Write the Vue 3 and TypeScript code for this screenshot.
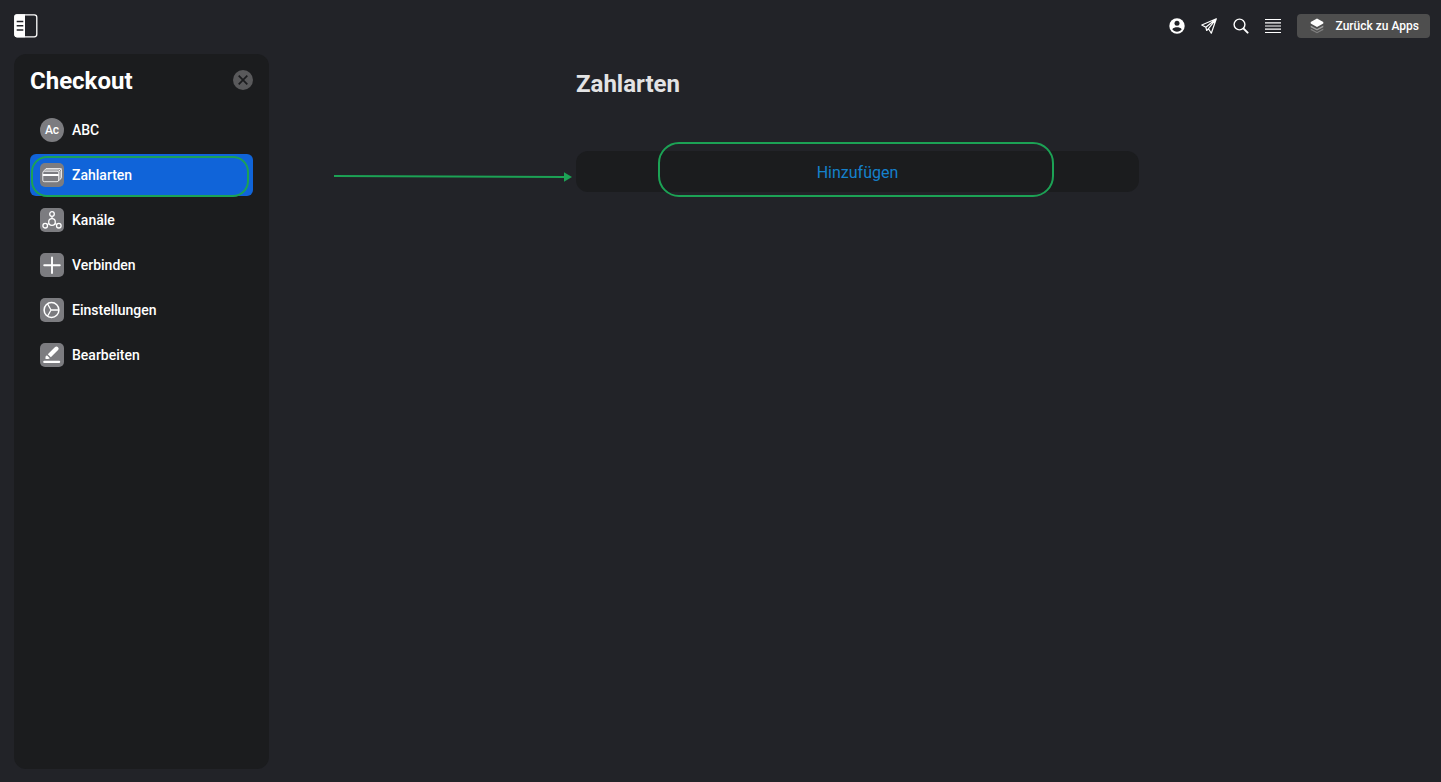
<script setup lang="ts">
import { ref } from 'vue'

type IconName = 'avatar' | 'cards' | 'channels' | 'plus' | 'gear' | 'edit'

interface NavItem {
  label: string
  icon: IconName
}

const items: NavItem[] = [
  { label: 'ABC', icon: 'avatar' },
  { label: 'Zahlarten', icon: 'cards' },
  { label: 'Kanäle', icon: 'channels' },
  { label: 'Verbinden', icon: 'plus' },
  { label: 'Einstellungen', icon: 'gear' },
  { label: 'Bearbeiten', icon: 'edit' },
]

const active = ref('Zahlarten')
</script>

<template>
  <div class="app">
    <header class="topbar">
      <button class="icon-button" type="button" aria-label="Seitenleiste">
        <svg width="24" height="24" viewBox="0 0 24 24">
          <rect x=".8" y=".8" width="22" height="22" rx="2.5" fill="none" stroke="#fff" stroke-width="1.3" />
          <path d="M3 .3h8v23H3A2.500 2.500 0 0 1 .3 21V3A2.500 2.500 0 0 1 3 .3Z" fill="#fff" />
          <path d="M2.700 7.500h6.600M2.700 11.700h6.600M2.700 16h6.600" stroke="#222328" stroke-width="1.400" />
        </svg>
      </button>
      <div class="actions">
        <button class="icon-button" type="button" aria-label="Konto">
          <svg width="16" height="16" viewBox="0 0 16 16">
            <circle cx="8" cy="8" r="7.7" fill="#fff" />
            <circle cx="8" cy="5.3" r="2.5" fill="#222328" />
            <path d="M3.300 11.200C4.200 9.800 6.200 9.200 8 9.200s3.800.6 4.700 2C11.700 12.800 10 13.700 8 13.700s-3.700-.9-4.700-2.500Z" fill="#222328" />
          </svg>
        </button>
        <button class="icon-button" type="button" aria-label="Senden">
          <svg width="16" height="16" viewBox="0 0 16 16" fill="none" stroke="#fff" stroke-width="1.200" stroke-linejoin="round">
            <path d="M15.300.8.8 7l4 2.200L15.300.8 10.300 15.200 7.500 10.700ZM4.800 9.200l.9 3.300 1.800-1.800" />
          </svg>
        </button>
        <button class="icon-button" type="button" aria-label="Suchen">
          <svg width="16" height="16" viewBox="0 0 16 16" fill="none" stroke="#fff">
            <circle cx="6.500" cy="6.500" r="5.400" stroke-width="1.400" />
            <path d="m10.600 10.600 4 4" stroke-width="2" stroke-linecap="round" />
          </svg>
        </button>
        <button class="icon-button" type="button" aria-label="Menü">
          <svg width="16" height="16" viewBox="0 0 16 16" stroke="#fff" stroke-width="1.200">
            <path d="M0 1.500h16M0 4.800h16M0 8h16M0 11.200h16M0 14.500h16" />
          </svg>
        </button>
        <button class="back" type="button">
          <svg width="14" height="16" viewBox="0 0 14 16">
            <path d="m7 .5 6.300 3.400v1.700L7 9 .7 5.600V3.900Z" fill="#fff" />
            <path d="M.7 7.500 7 10.900l6.300-3.400v1.700L7 12.600.7 9.200Z" fill="#a0a0a0" />
            <path d="M.7 10.600 7 14l6.300-3.400v1.300L7 15.300.7 11.900Z" fill="#808080" />
          </svg>
          <span>Zurück zu Apps</span>
        </button>
      </div>
    </header>

    <div class="body">
      <aside class="sidebar">
        <div class="sidebar-head">
          <h2>Checkout</h2>
          <button class="icon-button" type="button" aria-label="Schließen">
            <svg width="20" height="20" viewBox="0 0 20 20">
              <circle cx="10" cy="10" r="10" fill="#59595b" />
              <path d="m5.700 5.700 8.600 8.600m0-8.600-8.600 8.600" stroke="#1b1c1e" stroke-width="1.700" />
            </svg>
          </button>
        </div>
        <nav>
          <button
            v-for="item in items"
            :key="item.label"
            type="button"
            class="nav-item"
            :class="{ active: item.label === active }"
            @click="active = item.label"
          >
            <span v-if="item.icon === 'avatar'" class="tile round">Ac</span>
            <span v-else class="tile">
              <svg width="24" height="24" viewBox="0 0 24 24" fill="none" stroke="#fff">
                <g v-if="item.icon === 'cards'" stroke-width=".8" stroke-linejoin="round">
                  <rect x="2.800" y="8.300" width="15.800" height="10.400" rx="1.500" />
                  <path d="M3.500 8.300 6 5.500h14.500q1 0 1 1v8.300l-3 3.200M5 6.900h13.500q1.500 0 1.500 1.400v8M18.300 8.600l2.900-2.900" />
                  <path d="M2.800 12h15.800" stroke-width="2" />
                </g>
                <g v-else-if="item.icon === 'channels'" stroke-width="1.300">
                  <circle cx="12" cy="14" r="3.300" />
                  <circle cx="12" cy="6" r="2.300" />
                  <circle cx="5.200" cy="17.700" r="2.300" />
                  <circle cx="18.800" cy="17.700" r="2.300" />
                  <path d="M12 8.400v2.300M7.300 16.500l1.800-1M16.700 16.500l-1.800-1" />
                </g>
                <path v-else-if="item.icon === 'plus'" d="M12 4.500v15.500M4.200 12.300h15.600" stroke-width="1.900" stroke-linecap="round" />
                <g v-else-if="item.icon === 'gear'" stroke-width="1.500">
                  <circle cx="11.500" cy="12" r="7.400" />
                  <path d="M7.500 5.700 11 12l-3.500 6.300M11 12h8" stroke-width="1.300" />
                </g>
                <g v-else stroke="none" fill="#fff">
                  <path d="m7.800 11.300 7.300-7.200q1.400-1.300 2.900.1 1.400 1.500.1 2.900L10.800 14.300Z" />
                  <path d="m6.900 12.200 3 3-1.700.8H5.500v-2.200Z" />
                  <rect x="3.200" y="17.700" width="17" height="2.300" rx="1.100" />
                </g>
              </svg>
            </span>
            <span>{{ item.label }}</span>
            <span v-if="item.icon === 'cards'" class="marker nav-marker"></span>
          </button>
        </nav>
      </aside>

      <main>
        <section class="content">
          <h1>Zahlarten</h1>
          <div class="add-row">
            <button class="add" type="button">Hinzufügen</button>
            <span class="marker add-marker"></span>
            <svg class="arrow" width="238" height="10" viewBox="0 0 238 10">
              <path d="M0 4 231 5" stroke="#1ca255" stroke-width="1.900" />
              <path d="M230 .3 238 5l-8 4.700Z" fill="#1ca255" />
            </svg>
          </div>
        </section>
      </main>
    </div>
  </div>
</template>

<style>
body {
  margin: 0;
  background: #222328;
}
</style>

<style scoped>
.app {
  box-sizing: border-box;
  min-height: 100vh;
  display: flex;
  flex-direction: column;
  padding-bottom: 13px;
  background: #222328;
  color: #fff;
  font-family: Roboto, 'Liberation Sans', sans-serif;
}

button {
  border: 0;
  padding: 0;
  background: none;
  color: inherit;
  font: inherit;
  cursor: pointer;
}

svg {
  display: block;
  flex: none;
}

h1,
h2 {
  margin: 0;
  font-size: 24px;
  line-height: 28px;
  font-weight: 700;
}

.topbar {
  display: flex;
  align-items: center;
  justify-content: space-between;
  height: 52px;
  padding: 0 11px 0 14px;
  margin-bottom: 2px;
}

.actions {
  display: flex;
  align-items: center;
  gap: 16px;
}

.icon-button {
  display: block;
}

.back {
  display: flex;
  align-items: center;
  gap: 12px;
  height: 24px;
  padding: 0 11px 0 13px;
  border-radius: 4px;
  background: #4e4e4e;
  font-size: 12px;
  font-weight: 500;
}

.body {
  flex: 1;
  display: flex;
  gap: 19px;
  padding: 0 14px;
}

.sidebar {
  box-sizing: border-box;
  flex: none;
  width: 255px;
  padding: 12px 16px;
  border-radius: 12px;
  background: #1b1c1e;
}

.sidebar-head {
  display: flex;
  align-items: center;
  justify-content: space-between;
}

h2 {
  line-height: 30px;
}

.sidebar-head .icon-button {
  margin-bottom: 2px;
}

nav {
  display: flex;
  flex-direction: column;
  gap: 3px;
  margin-top: 13px;
}

.nav-item {
  position: relative;
  display: flex;
  align-items: center;
  gap: 8px;
  height: 42px;
  padding: 0 10px;
  border-radius: 6px;
  font-size: 14px;
  font-weight: 500;
}

.nav-item.active {
  background: #1064d9;
}

.tile {
  display: flex;
  align-items: center;
  justify-content: center;
  width: 24px;
  height: 24px;
  border-radius: 5px;
  background: #7c7c80;
  font-size: 12px;
}

.tile.round {
  border-radius: 50%;
}

.marker {
  position: absolute;
  box-sizing: border-box;
  border: 2px solid #1ca255;
  pointer-events: none;
}

.nav-marker {
  inset: 2px 4px -1px 1px;
  border-radius: 16px;
}

main {
  flex: 1;
  min-width: 0;
}

.content {
  max-width: 563px;
  margin: 0 auto;
  padding-top: 16px;
}

h1 {
  color: #e3e3e4;
}

.add-row {
  position: relative;
  margin-top: 53px;
}

.add {
  display: block;
  width: 100%;
  height: 41px;
  padding-top: 2px;
  border-radius: 12px;
  background: #1b1c1e;
  color: #1581cc;
  font-size: 16px;
}

.add-marker {
  inset: -9px 85px -5px 82px;
  border-radius: 21px;
}

.arrow {
  position: absolute;
  top: 21px;
  right: 100%;
  margin-right: 4px;
}
</style>
